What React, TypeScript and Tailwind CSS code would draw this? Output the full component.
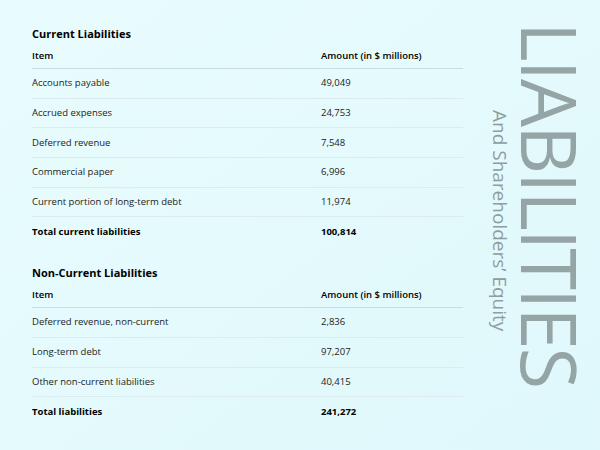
const current = [
  ["Accounts payable", "49,049"],
  ["Accrued expenses", "24,753"],
  ["Deferred revenue", "7,548"],
  ["Commercial paper", "6,996"],
  ["Current portion of long-term debt", "11,974"],
];
const noncurrent = [
  ["Deferred revenue, non-current", "2,836"],
  ["Long-term debt", "97,207"],
  ["Other non-current liabilities", "40,415"],
];

function Table({ title, rows, total }: { title: string; rows: string[][]; total: string[] }) {
  return (
    <div>
      <div className="h-[14px] flex items-center text-[11px] font-bold text-black">{title}</div>
      <div className="h-[28px] flex items-end pb-[5px] border-b border-[#c9dcdf] text-[9.5px] font-semibold text-black">
        <div className="w-[289px]">Item</div>
        <div>Amount (in $ millions)</div>
      </div>
      {rows.map(([a, b]) => (
        <div key={a} className="h-[29.7px] flex items-center border-b border-[#dcecee] text-[9.5px] text-[#222]">
          <div className="w-[289px]">{a}</div>
          <div>{b}</div>
        </div>
      ))}
      <div className="h-[29.7px] flex items-center text-[9.5px] font-bold text-black">
        <div className="w-[289px]">{total[0]}</div>
        <div>{total[1]}</div>
      </div>
    </div>
  );
}

export default function App() {
  return (
    <div className="w-[600px] h-[450px] overflow-hidden bg-gradient-to-br from-[#e9fcfd] to-[#dff8fb] flex" style={{ fontFamily: '"Open Sans", "Noto Sans", sans-serif' }}>
      <div className="w-[431px] ml-[32px] pt-[27px] flex flex-col gap-[19px]">
        <Table title="Current Liabilities" rows={current} total={["Total current liabilities", "100,814"]} />
        <Table title="Non-Current Liabilities" rows={noncurrent} total={["Total liabilities", "241,272"]} />
      </div>
      <div className="flex-1 flex flex-row-reverse pr-[12px]">
        <div className="[writing-mode:vertical-rl] text-[76px] leading-[76px] tracking-[-2px] font-medium text-[#95a5a6] pt-[22px]" style={{ fontFamily: '"Open Sans", sans-serif' }}>LIABILITIES</div>
        <div className="[writing-mode:vertical-rl] text-[19px] leading-[20px] text-[#8e9d9f] pt-[110px] mr-[2px]">And Shareholders’ Equity</div>
      </div>
    </div>
  );
}
